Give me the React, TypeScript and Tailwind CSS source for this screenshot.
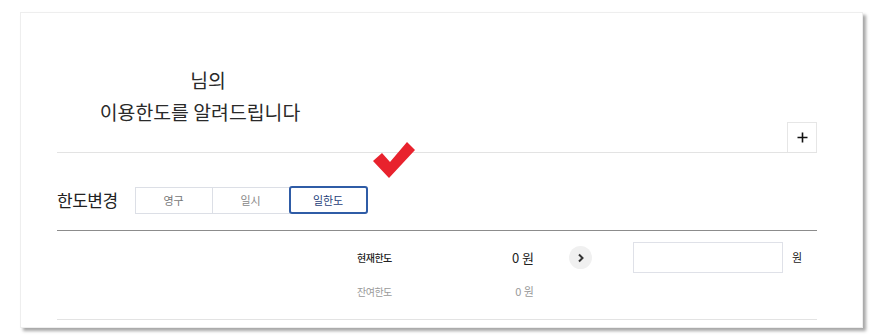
export default function App() {
  return (
    <div
      className="w-[873px] h-[335px] bg-white pt-[12px] pl-[20px]"
      style={{ fontFamily: '"Noto Sans CJK KR", "Noto Sans", sans-serif' }}
    >
      <div className="relative w-[843px] h-[316px] bg-white border border-[#eeeeee] shadow-[3px_3px_3px_rgba(0,0,0,0.35)] pl-[36px] pr-[45px]">
        {/* 상단 안내 */}
        <div className="flex h-[140px] items-end justify-between border-b border-[#e3e3e3]">
          <div className="w-[286px] self-start pt-[51px] text-center text-[19.4px] leading-[32px] text-[#2a2a2a]">
            <div className="pl-[16px]">님의</div>
            <div>이용한도를 알려드립니다</div>
          </div>
          <button className="flex h-[30px] w-[30px] items-center justify-center border border-b-0 border-[#e6e6e6] bg-white">
            <svg width="11" height="11" viewBox="0 0 11 11">
              <path d="M5.5 0.5v10M0.5 5.5h10" stroke="#111" strokeWidth="1.6" />
            </svg>
          </button>
        </div>

        <svg className="absolute left-[349px] top-[127px]" width="48" height="40" viewBox="0 0 48 40">
          <polygon points="3,21 12,13 20,22 37,2 45,10 19,38" fill="#e8222d" />
        </svg>

        {/* 한도변경 */}
        <div className="flex h-[78px] items-start border-b border-[#8c8c8c] pt-[33px]">
          <div className="flex h-[28px] items-center">
            <span className="text-[17px] text-[#222] tracking-[-0.5px]">한도변경</span>
            <div className="ml-[17px] flex items-center">
              <button className="h-[27px] w-[77px] border border-r-0 border-[#dcdfe6] text-[11px] text-[#777]">
                영구
              </button>
              <button className="h-[27px] w-[78px] border border-[#dcdfe6] text-[11px] text-[#888]">
                일시
              </button>
              <button className="-ml-px h-[28px] w-[79px] rounded-[3px] border-2 border-[#2f5ca6] text-[11px] text-[#1f3f7a]">
                일한도
              </button>
            </div>
          </div>
        </div>

        {/* 한도 금액 */}
        <div className="border-b border-[#e3e3e3] pb-[18px]">
          <div className="mt-[11px] flex h-[31px] items-center pl-[300px]">
            <span className="w-[110px] text-[10px] font-medium tracking-[-0.5px] text-[#222]">현재한도</span>
            <span className="w-[67px] text-right text-[13px] text-[#222]">0 원</span>
            <span className="ml-[35px] flex h-[23px] w-[23px] items-center justify-center rounded-full bg-[#f0f0f0]">
              <svg width="8" height="10" viewBox="0 0 8 10">
                <path d="M2 1.5l3.5 3.5L2 8.5" fill="none" stroke="#333" strokeWidth="2" />
              </svg>
            </span>
            <input className="ml-[41px] h-[31px] w-[150px] border border-[#dfe1e8] outline-none" />
            <span className="ml-[9px] text-[11px] text-[#222]">원</span>
          </div>
          <div className="mt-[8px] flex h-[20px] items-center pl-[300px]">
            <span className="w-[110px] text-[10px] tracking-[-0.5px] text-[#9a9a9a]">잔여한도</span>
            <span className="w-[67px] text-right text-[11px] text-[#9a9a9a]">0 원</span>
          </div>
        </div>
      </div>
    </div>
  );
}
